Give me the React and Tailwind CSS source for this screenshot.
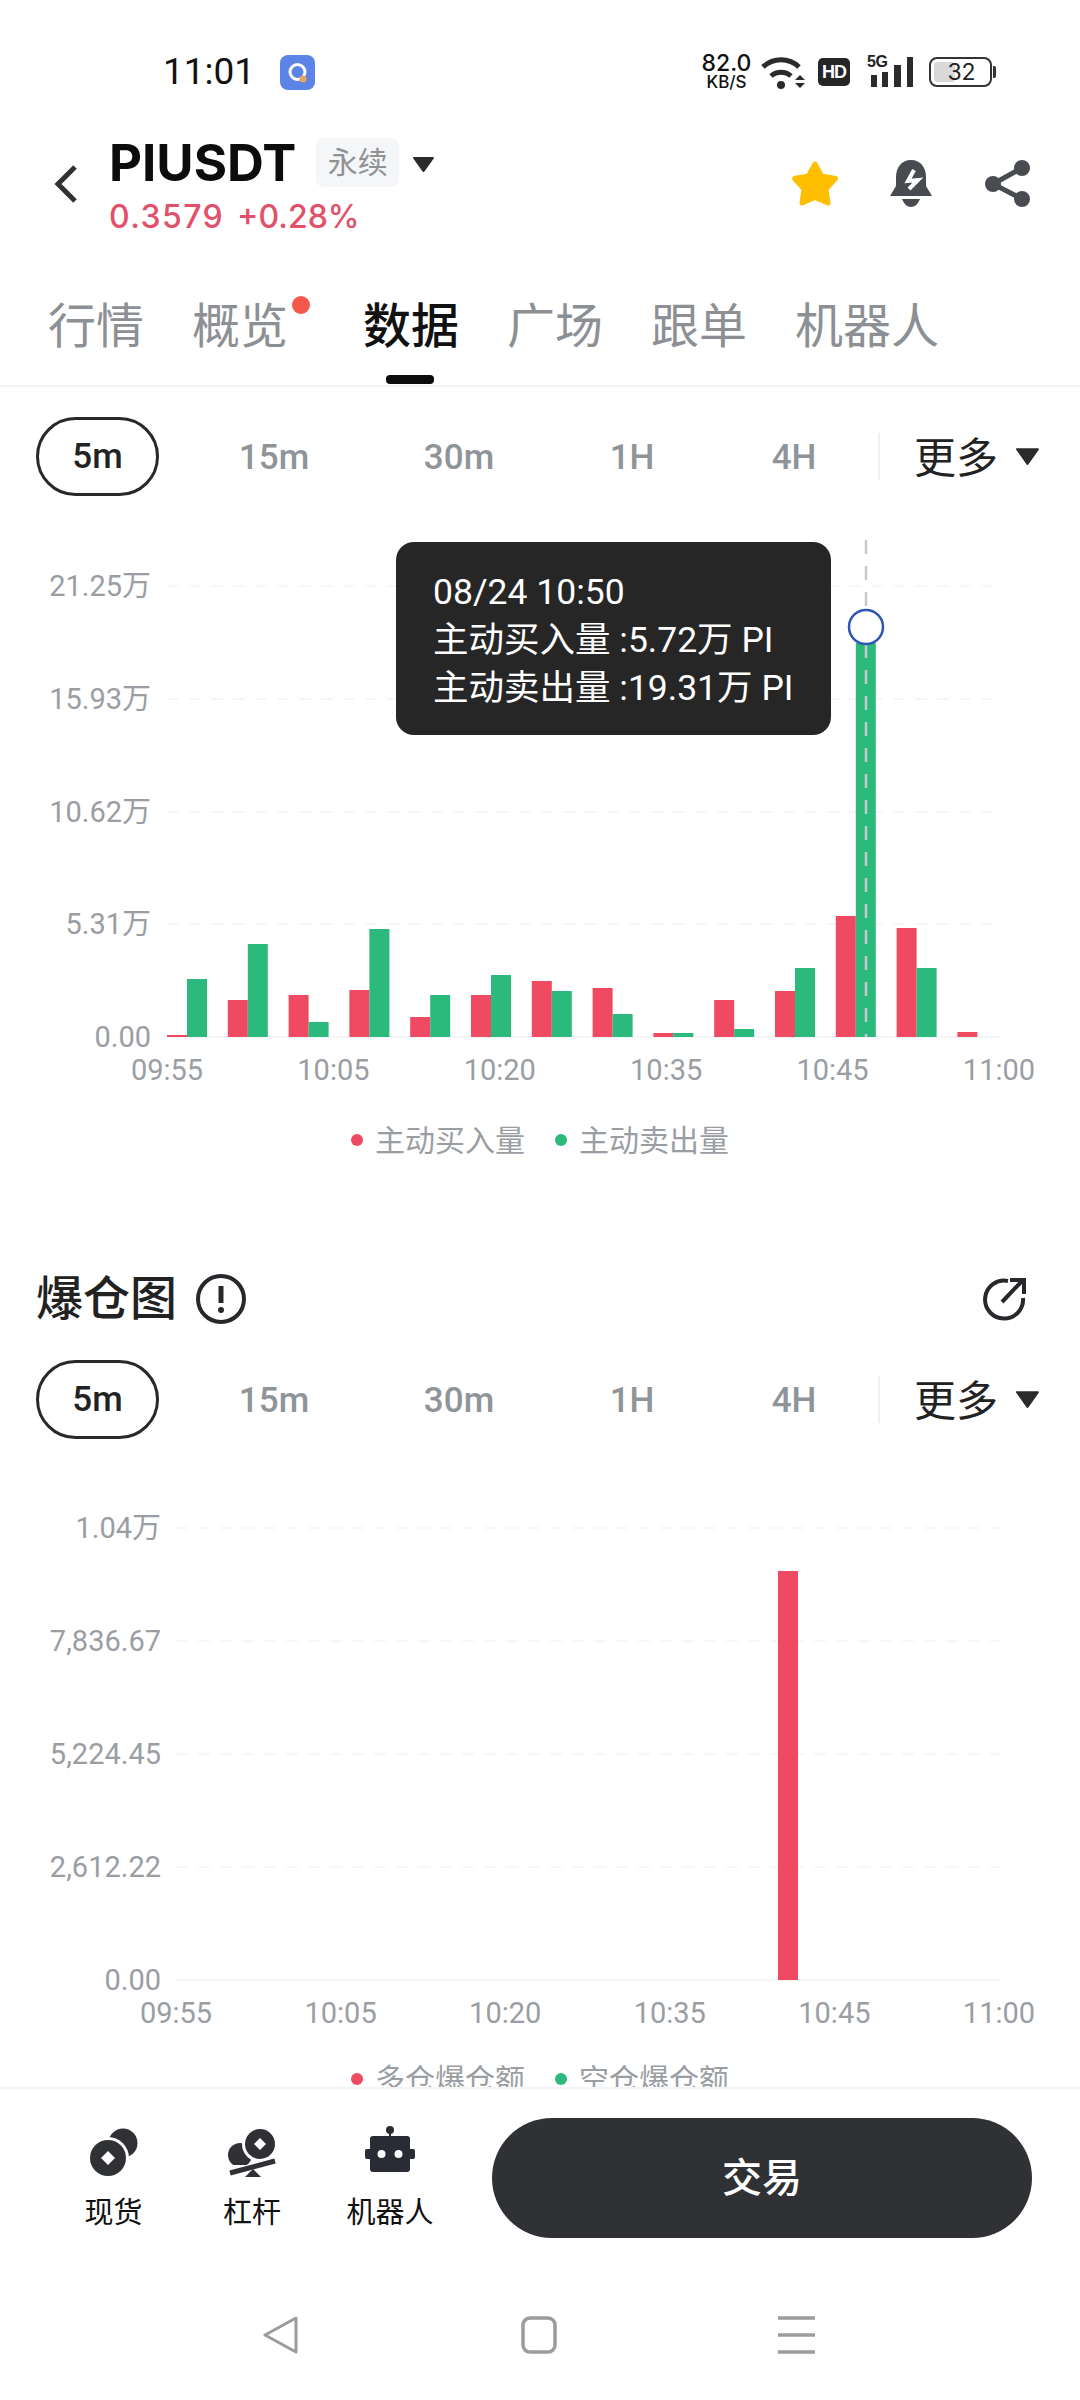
import React from "react";

const SANS = "[font-family:Inter,'Noto_Sans_CJK_SC',sans-serif]";
const NUM = "[font-family:Roboto,'Noto_Sans_CJK_SC',sans-serif]";

const RED = "#f04a62";
const GREEN = "#2bb97c";

const buyBars = [2, 37, 42, 47, 20, 42, 56, 49, 4, 37, 46, 121, 109, 5];
const sellBars = [58, 93, 15, 108, 42, 62, 46, 23, 4, 8, 69, 394, 69, 0];

function Triangle({ className }) {
  return (
    <svg className={className} viewBox="0 0 24 18">
      <path d="M2 2H22L12 16Z" fill="#2b2b2b" stroke="#2b2b2b" strokeWidth="2" strokeLinejoin="round" />
    </svg>
  );
}

function TimeFrames() {
  return (
    <div className="flex items-center h-[79px] pl-[36px]">
      <div className="w-[123px] h-[79px] pt-[2px] rounded-[40px] border-[3px] border-[#26282b] flex items-center justify-center text-[35px] font-medium text-[#222]">5m</div>
      <div className="ml-[25px] w-[180px] pt-[4px] text-center text-[35px] font-medium text-[#8f9499]">15m</div>
      <div className="w-[190px] pt-[4px] text-center text-[35px] font-medium text-[#8f9499]">30m</div>
      <div className="w-[156px] pt-[4px] text-center text-[35px] font-medium text-[#8f9499]">1H</div>
      <div className="w-[168px] pt-[4px] text-center text-[35px] font-medium text-[#8f9499]">4H</div>
      <div className="w-[2px] h-[47px] bg-[#f0f1f2]"></div>
      <div className="ml-[34px] pt-[5px] text-[42px] leading-[48px] text-[#222]">更多</div>
      <Triangle className="ml-[17px] w-[25px] h-[19px]" />
    </div>
  );
}

function AxisLabels({ labels, width, className }) {
  return (
    <div className={"flex justify-between text-[29px] leading-[36px] text-[#9a9ea3] " + className} style={{ width }}>
      {labels.map((t) => (
        <div key={t} className="w-0 flex justify-center whitespace-nowrap">{t}</div>
      ))}
    </div>
  );
}

function YLabels({ labels, className }) {
  return (
    <div className={"flex flex-col justify-between items-end shrink-0 text-[29px] text-[#9a9ea3] " + className}>
      {labels.map((t) => (
        <div key={t} className="h-[32px] leading-[33px] whitespace-nowrap">{t}</div>
      ))}
    </div>
  );
}

function Legend({ left, right, className }) {
  return (
    <div className={"flex justify-center items-center h-[40px] text-[30px] text-[#9a9ea3] " + className}>
      <div className="w-[12px] h-[12px] rounded-full bg-[#f04a62] mr-[12px]"></div>
      <div>{left}</div>
      <div className="w-[12px] h-[12px] rounded-full bg-[#2bb97c] ml-[30px] mr-[12px]"></div>
      <div>{right}</div>
    </div>
  );
}

function VolumeChart() {
  const gridY = [46, 159, 272, 384];
  return (
    <div className="flex h-[513px] mt-[44px]">
      <YLabels labels={["21.25万", "15.93万", "10.62万", "5.31万", "0.00"]} className="w-[151px] pt-[30px] h-[513px]" />
      <div className="relative flex-1">
        <svg className="block" width="929" height="513" viewBox="1 0 929 513">
          {gridY.map((y) => (
            <line key={y} x1="17" x2="850" y1={y} y2={y} stroke="#f7f7f8" strokeWidth="2" strokeDasharray="12 10" />
          ))}
          <line x1="17" x2="850" y1="497" y2="497" stroke="#f4f5f6" strokeWidth="2" />
          {buyBars.map((h, i) => (
            <rect key={i} x={17 + 60.8 * i} y={497 - h} width="20" height={h} fill={RED} />
          ))}
          {sellBars.map((h, i) => (
            <rect key={i} x={37 + 60.8 * i} y={497 - h} width="20" height={h} fill={GREEN} />
          ))}
          <line x1="716" x2="716" y1="0" y2="497" stroke="#c6cbc9" strokeWidth="2.5" strokeDasharray="14 12" />
          <circle cx="716" cy="87" r="17" fill="#fff" stroke="#2f55b5" strokeWidth="2.5" />
        </svg>
        <div className="absolute left-[245px] top-[2px] w-[435px] h-[193px] rounded-[18px] bg-[#262626] pl-[37px] pt-[26px] text-[35.5px] leading-[48px] text-white whitespace-nowrap">
          <div>08/24 10:50</div>
          <div>主动买入量 :5.72万 PI</div>
          <div>主动卖出量 :19.31万 PI</div>
        </div>
      </div>
    </div>
  );
}

function LiquidationChart() {
  const gridY = [16, 129, 242, 355];
  return (
    <div className="flex h-[484px] mt-[73px]">
      <YLabels labels={["1.04万", "7,836.67", "5,224.45", "2,612.22", "0.00"]} className="w-[161px] h-[484px]" />
      <div className="flex-1">
        <svg className="block" width="919" height="484" viewBox="1 0 919 484">
          {gridY.map((y) => (
            <line key={y} x1="16" x2="840" y1={y} y2={y} stroke="#f7f7f8" strokeWidth="2" strokeDasharray="12 10" />
          ))}
          <line x1="16" x2="840" y1="468" y2="468" stroke="#f4f5f6" strokeWidth="2" />
          <rect x="618" y="59" width="20" height="409" fill={RED} />
        </svg>
      </div>
    </div>
  );
}

function StatusBar() {
  return (
    <div className="flex items-center h-[128px] pt-[16px] pl-[163px]">
      <div className={"w-[91px] text-[37px] leading-[56px] text-[#111] " + NUM}>11:01</div>
      <svg className="ml-[26px]" width="35" height="35" viewBox="0 0 35 35">
        <rect width="35" height="35" rx="8" fill="#5b84e6" />
        <circle cx="17.5" cy="17" r="7.5" fill="none" stroke="#fff" strokeWidth="3" />
        <circle cx="23" cy="24" r="3.5" fill="#e8a45c" />
      </svg>
      <div className="ml-[387px] w-[49px] flex flex-col items-center text-[#111]">
        <div className="text-[23px] leading-[20px] font-medium">82.0</div>
        <div className="text-[17px] leading-[18px] font-medium whitespace-nowrap">KB/S</div>
      </div>
      <svg className="ml-[10px]" width="44" height="33" viewBox="0 0 44 33">
        <g fill="none" stroke="#2b2b2b" strokeWidth="5">
          <path d="M2 11A26 26 0 0 1 38 11" />
          <path d="M10 20A15 15 0 0 1 30 20" />
        </g>
        <circle cx="20" cy="29" r="4" fill="#2b2b2b" />
        <path d="M34 24L39 19L44 24ZM34 27L39 32L44 27Z" fill="#2b2b2b" />
      </svg>
      <div className="ml-[13px] w-[32px] h-[28px] rounded-[5px] bg-[#262626] flex items-center justify-center text-[18px] font-bold text-white [font-family:'Liberation_Sans',sans-serif] tracking-[-1px]">HD</div>
      <div className="relative ml-[17px] w-[46px] h-[32px]">
        <div className="absolute left-0 top-[-3px] text-[16px] leading-[18px] font-bold text-[#222] [font-family:'Liberation_Sans',sans-serif] tracking-[-0.5px]">5G</div>
        <svg width="46" height="32" viewBox="0 0 46 32">
          <rect x="4" y="19" width="6" height="12" fill="#2b2b2b" />
          <rect x="15" y="16" width="6" height="15" fill="#2b2b2b" />
          <rect x="27" y="9" width="7" height="22" fill="#2b2b2b" />
          <rect x="40" y="1" width="6" height="30" fill="#2b2b2b" />
        </svg>
      </div>
      <div className="flex items-center ml-[16px]">
        <div className="relative w-[63px] h-[30px] rounded-[8px] border-2 border-[#333] flex items-center justify-center overflow-hidden">
          <div className="absolute left-[3px] top-[3px] bottom-[3px] w-[21px] rounded-[3px] bg-[#d9d9d9]"></div>
          <div className="relative text-[23px] text-[#222] pl-[2px]">32</div>
        </div>
        <div className="ml-[1px] w-[3px] h-[12px] bg-[#333] rounded-r-[2px]"></div>
      </div>
    </div>
  );
}

function Header() {
  return (
    <div className="flex h-[112px] pl-[54px]">
      <svg className="mt-[37px]" width="24" height="38" viewBox="0 0 24 38">
        <path d="M21 2L4 19L21 36" fill="none" stroke="#2f3135" strokeWidth="5" />
      </svg>
      <div className="ml-[31px] pt-[7px]">
        <div className="flex items-center h-[54px]">
          <div className="pt-[1px] text-[51px] leading-[54px] font-bold text-[#0c0c0c]">PIUSDT</div>
          <div className="ml-[20px] w-[83px] h-[49px] rounded-[8px] bg-[#f5f6f7] flex items-center justify-center text-[30px] text-[#8f9295]">永续</div>
          <Triangle className="ml-[13px] w-[23px] h-[17px] mt-[4px]" />
        </div>
        <div className="flex items-center h-[44px] mt-[6px] text-[32px] font-medium text-[#e2506a]">
          <div className="tracking-[1.4px]">0.3579</div>
          <div className="ml-[13px]">+0.28%</div>
        </div>
      </div>
      <div className="flex ml-auto pr-[49px] pt-[32px] h-[80px]">
        <svg width="50" height="47" viewBox="0 0 50 47">
          <path d="M25 4L31.5 16L45.5 18.5L36 29L38 43L25 37.5L12 43L14 29L4.5 18.5L18.5 16Z" fill="#ffbf00" stroke="#ffbf00" strokeWidth="5" strokeLinejoin="round" />
        </svg>
        <svg className="ml-[50px]" width="42" height="47" viewBox="0 0 42 47">
          <path d="M21 0C11 0 6 8 6 17V26L0 36H42L36 26V17C36 8 31 0 21 0Z" fill="#484b50" />
          <path d="M12 39H30C28 44 25 47 21 47S14 44 12 39Z" fill="#484b50" />
          <path d="M24 10L18 21L28 20L19 29" fill="none" stroke="#fff" strokeWidth="4" />
        </svg>
        <svg className="ml-[53px]" width="46" height="47" viewBox="0 0 46 47">
          <path d="M37 8L8 24L37 39" fill="none" stroke="#484b50" strokeWidth="5" />
          <circle cx="37" cy="8" r="8" fill="#484b50" />
          <circle cx="8" cy="24" r="8" fill="#484b50" />
          <circle cx="37" cy="39" r="8" fill="#484b50" />
        </svg>
      </div>
    </div>
  );
}

function Tabs() {
  const rest = ["广场", "跟单", "机器人"];
  return (
    <div className="flex gap-[48px] h-[147px] pl-[48px] pt-[62px] border-b-2 border-[#f3f4f5] text-[48px] leading-[48px] text-[#8c9094]">
      <div>行情</div>
      <div className="relative pr-[27px]">
        概览
        <div className="absolute left-[100px] top-[-6px] w-[18px] h-[18px] rounded-full bg-[#f4584a]"></div>
      </div>
      <div className="flex flex-col items-center text-[#111] font-medium">
        <div>数据</div>
        <div className="w-[48px] h-[9px] rounded-[4px] bg-[#0c0c0c] mt-[25px] mr-[2px]"></div>
      </div>
      {rest.map((t) => (
        <div key={t}>{t}</div>
      ))}
    </div>
  );
}

function CoinsIcon() {
  return (
    <svg width="48" height="48" viewBox="0 0 48 48">
      <circle cx="33" cy="15" r="14.5" fill="#2f3135" />
      <circle cx="18" cy="30" r="21" fill="#fff" />
      <circle cx="18" cy="30" r="18" fill="#2f3135" />
      <path d="M18 23L25 30L18 37L11 30Z" fill="#fff" />
    </svg>
  );
}

function LeverIcon() {
  return (
    <svg width="48" height="50" viewBox="0 0 48 50">
      <circle cx="12" cy="27" r="12" fill="#2f3135" />
      <circle cx="32" cy="16" r="18" fill="#fff" />
      <circle cx="32" cy="16" r="15" fill="#2f3135" />
      <path d="M32 10L38 16L32 22L26 16Z" fill="#fff" />
      <path d="M0 41H48V37H0Z" fill="#fff" />
      <path d="M2 45L47 33" stroke="#2f3135" strokeWidth="5" fill="none" />
      <path d="M17 49H33L25 41Z" fill="#2f3135" />
    </svg>
  );
}

function RobotIcon() {
  return (
    <svg width="50" height="46" viewBox="0 0 50 46">
      <circle cx="25" cy="4" r="4" fill="#2a2c35" />
      <rect x="24" y="4" width="2" height="8" fill="#2a2c35" />
      <rect x="5" y="10" width="40" height="36" rx="3" fill="#2a2c35" />
      <rect x="0" y="23" width="50" height="10" rx="2" fill="#2a2c35" />
      <circle cx="16.5" cy="28" r="4" fill="#fff" />
      <circle cx="33.5" cy="28" r="4" fill="#fff" />
    </svg>
  );
}

function BottomBar() {
  return (
    <div className="shrink-0 h-[313px] border-t-2 border-[#f3f4f5] bg-white">
      <div className="flex pl-[44px] pt-[29px]">
        <div className="w-[139px] flex flex-col items-center pt-[10px]">
          <CoinsIcon />
          <div className="mt-[17px] text-[29px] leading-[40px] text-[#111]">现货</div>
        </div>
        <div className="w-[138px] flex flex-col items-center pt-[10px]">
          <LeverIcon />
          <div className="mt-[15px] text-[29px] leading-[40px] text-[#111]">杠杆</div>
        </div>
        <div className="w-[138px] flex flex-col items-center pt-[8px]">
          <RobotIcon />
          <div className="mt-[21px] text-[29px] leading-[40px] text-[#111]">机器人</div>
        </div>
        <div className="ml-[33px] w-[540px] h-[120px] rounded-full bg-[#2f3135] flex items-center justify-center text-[40px] font-medium text-white">交易</div>
      </div>
      <div className="flex mt-[78px] h-[38px] pl-[263px]">
        <svg width="36" height="38" viewBox="0 0 36 38">
          <path d="M33 2L2 19L33 36Z" fill="none" stroke="#9c9c9c" strokeWidth="3" strokeLinejoin="round" />
        </svg>
        <svg className="ml-[222px]" width="36" height="38" viewBox="0 0 36 38">
          <rect x="2" y="2" width="32" height="34" rx="7" fill="none" stroke="#9c9c9c" strokeWidth="3.5" />
        </svg>
        <svg className="ml-[221px]" width="37" height="38" viewBox="0 0 37 38">
          <path d="M0 2H37M0 19H37M0 36H37" stroke="#9c9c9c" strokeWidth="3.5" />
        </svg>
      </div>
    </div>
  );
}

export default function App() {
  return (
    <div className={"w-[1080px] h-[2400px] flex flex-col bg-white overflow-hidden " + SANS}>
      <div className="flex-1 overflow-hidden">
        <StatusBar />
        <Header />
        <Tabs />
        <div className={NUM}>
          <div className="mt-[30px]">
            <TimeFrames />
          </div>
          <VolumeChart />
          <AxisLabels labels={["09:55", "10:05", "10:20", "10:35", "10:45", "11:00"]} width={832} className="ml-[167px] mt-[-1px]" />
          <Legend left="主动买入量" right="主动卖出量" className="mt-[32px]" />
          <div className="flex items-center h-[60px] mt-[109px] pl-[36px] pr-[52px]">
            <div className="text-[47px] leading-[60px] font-medium text-[#222]">爆仓图</div>
            <svg className="ml-[18px]" width="52" height="52" viewBox="0 0 52 52">
              <circle cx="26" cy="26" r="23" fill="none" stroke="#26282b" strokeWidth="4" />
              <path d="M26 13V30" stroke="#26282b" strokeWidth="5" />
              <circle cx="26" cy="37" r="3" fill="#26282b" />
            </svg>
            <svg className="ml-auto" width="46" height="46" viewBox="0 0 46 46">
              <g fill="none" stroke="#26282b" strokeWidth="4">
                <path d="M26 5A19 19 0 1 0 41 22" />
                <path d="M20 26L40 5" />
                <path d="M28 4H42V18" />
              </g>
            </svg>
          </div>
          <div className="mt-[31px]">
            <TimeFrames />
          </div>
          <LiquidationChart />
          <AxisLabels labels={["09:55", "10:05", "10:20", "10:35", "10:45", "11:00"]} width={823} className="ml-[176px] mt-[-1px]" />
          <Legend left="多仓爆仓额" right="空仓爆仓额" className="mt-[28px]" />
        </div>
      </div>
      <BottomBar />
    </div>
  );
}
